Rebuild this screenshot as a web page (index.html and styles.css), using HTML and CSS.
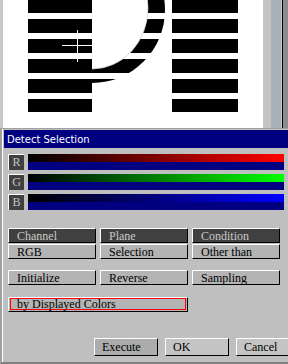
FILE: index.html
```html
<!DOCTYPE html>
<html lang="en">

<head>
    <meta charset="UTF-8">
    <meta name="viewport" content="width=device-width, initial-scale=1.0">
    <title>Detect Selection</title>
    <link rel="stylesheet" href="styles.css">
</head>

<body>
    <div class="canvas-row">
        <div class="canvas">
            <svg width="260" height="128" viewBox="3 0 260 128">
                <defs>
                    <pattern id="stripes" patternUnits="userSpaceOnUse" x="0" y="-1" width="20" height="20">
                        <rect x="0" y="0" width="20" height="14" fill="#000"></rect>
                    </pattern>
                    <clipPath id="right-half">
                        <rect x="92" y="-10" width="120" height="140"></rect>
                    </clipPath>
                </defs>
                <g clip-path="url(#right-half)">
                    <ellipse cx="92" cy="10" rx="73" ry="73" fill="url(#stripes)"></ellipse>
                    <ellipse cx="92" cy="8" rx="56" ry="61" fill="#fff" stroke="#d4d4d4" stroke-width="0.8"></ellipse>
                </g>
                <rect x="28" y="-10" width="64" height="122" fill="url(#stripes)"></rect>
                <rect x="172" y="-10" width="66" height="122" fill="url(#stripes)"></rect>
                <line x1="77.5" y1="30" x2="77.5" y2="62" stroke="#fff" stroke-width="1"></line>
                <line x1="62" y1="45.5" x2="93" y2="45.5" stroke="#fff" stroke-width="1"></line>
            </svg>
        </div>
        <div class="sb-track"></div>
        <div class="sb-thumb"></div>
        <div class="sb-line"></div>
        <div class="sb-edge"></div>
    </div>

    <div class="dialog">
        <div class="titlebar">Detect Selection</div>

        <div class="channels">
            <div class="channel">
                <span class="chan-label">R</span>
                <div class="bar"><div class="grad grad-r"></div></div>
            </div>
            <div class="channel">
                <span class="chan-label">G</span>
                <div class="bar"><div class="grad grad-g"></div></div>
            </div>
            <div class="channel">
                <span class="chan-label">B</span>
                <div class="bar"><div class="grad grad-b"></div></div>
            </div>
        </div>

        <div class="grid first">
            <div class="btn head">Channel</div>
            <div class="btn head">Plane</div>
            <div class="btn head">Condition</div>
            <div class="btn">RGB</div>
            <div class="btn">Selection</div>
            <div class="btn">Other than</div>
        </div>

        <div class="grid second">
            <div class="btn">Initialize</div>
            <div class="btn">Reverse</div>
            <div class="btn">Sampling</div>
        </div>

        <div class="mode-btn">
            <div class="mode-inner">by Displayed Colors</div>
        </div>

        <div class="actions">
            <div class="action execute">Execute</div>
            <div class="action">OK</div>
            <div class="action">Cancel</div>
        </div>
    </div>
</body>

</html>
```

FILE: styles.css
```css
body {
    margin: 0;
    width: 288px;
    height: 364px;
    overflow: hidden;
    background-color: #bfbfbf;
    font-family: "Liberation Serif", serif;
}

/* image canvas with its scroll bar */
.canvas-row {
    display: flex;
    height: 128px;
    padding-left: 3px;
    background-color: #c8c8c8;
    border-bottom: 1px solid #a0a0a0;
}

.canvas {
    width: 260px;
    height: 128px;
    background-color: #fff;
    overflow: hidden;
}

.canvas svg {
    display: block;
}

.sb-track {
    width: 8px;
    background-color: #c4c4c4;
}

.sb-thumb {
    width: 10px;
    background-color: #a8b0b8;
}

.sb-line {
    width: 1px;
    margin-left: 1px;
    background-color: #000;
}

.sb-edge {
    flex: 1;
    background-color: #8c8c8c;
}

/* dialog */
.dialog {
    height: 232px;
    padding-top: 1px;
    border-left: 2px solid #a0a0a0;
    border-bottom: 2px solid #808080;
    box-shadow: inset 1px 0 0 #fff;
}

.titlebar {
    height: 18px;
    margin-left: 2px;
    padding-left: 3px;
    background-color: #000080;
    color: #fff;
    font-family: "DejaVu Sans", sans-serif;
    font-size: 10px;
    line-height: 19px;
}

.channels {
    display: flex;
    flex-direction: column;
    gap: 4px;
    margin-top: 6px;
    padding-left: 6px;
}

.channel {
    display: flex;
    gap: 4px;
    height: 16px;
}

.chan-label {
    box-sizing: border-box;
    width: 16px;
    height: 16px;
    border-top: 1px solid #fff;
    border-left: 1px solid #fff;
    background-color: #404040;
    color: #c4c4c4;
    font-size: 12px;
    line-height: 15px;
    text-align: center;
}

.bar {
    width: 256px;
    height: 16px;
    background-color: #000080;
}

.grad {
    height: 8px;
}

.grad-r {
    background: linear-gradient(to right, #000, #ff0000);
}

.grad-g {
    background: linear-gradient(to right, #000, #00ff00);
}

.grad-b {
    background: linear-gradient(to right, #000, #0000ff);
}

/* option buttons */
.grid {
    display: grid;
    grid-template-columns: repeat(3, 88px);
    column-gap: 4px;
    row-gap: 1px;
    padding-left: 6px;
}

.grid.first {
    margin-top: 18px;
}

.grid.second {
    margin-top: 11px;
}

.btn {
    box-sizing: border-box;
    height: 15px;
    padding: 1px 0 0 8px;
    border: 1px solid;
    border-color: #fff #000 #000 #fff;
    background-color: #b4b4b4;
    color: #000;
    font-size: 12px;
    line-height: 12px;
    white-space: nowrap;
}

.btn.head {
    background-color: #404040;
    color: #c8c8c8;
}

.mode-btn {
    box-sizing: border-box;
    width: 180px;
    height: 15px;
    margin: 12px 0 0 6px;
    padding: 0 1px 1px 1px;
    border: 1px solid;
    border-color: #fff #000 #000 #fff;
    background-color: #b4b4b4;
}

.mode-inner {
    box-sizing: border-box;
    height: 12px;
    padding-left: 6px;
    border: 1px solid #ff0000;
    font-size: 12px;
    line-height: 11px;
    white-space: nowrap;
}

.actions {
    display: flex;
    gap: 7px;
    margin: 26px 0 0 92px;
}

.action {
    box-sizing: border-box;
    flex: none;
    width: 64px;
    height: 18px;
    padding-left: 7px;
    border: 1px solid;
    border-color: #fff #000 #000 #fff;
    background-color: #c4c4c4;
    font-size: 12px;
    line-height: 16px;
}

.action.execute {
    background-color: #acacac;
}
```
